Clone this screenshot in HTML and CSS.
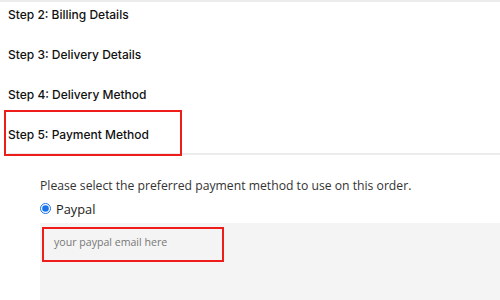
FILE: index.html
```html
<!DOCTYPE html>
<html lang="en">
<head>
  <meta charset="UTF-8" />
  <meta name="viewport" content="width=device-width, initial-scale=1.0"/>
  <title>Checkout</title>
  <link rel="stylesheet" href="styles.css">
</head>

<body>
  <div class="checkout">
    <div class="steps">
      <h4 class="step">Step 2: Billing Details</h4>
      <h4 class="step">Step 3: Delivery Details</h4>
      <h4 class="step">Step 4: Delivery Method</h4>
      <h4 class="step active">Step 5: Payment Method</h4>
    </div>

    <div class="payment">
      <p class="intro">Please select the preferred payment method to use on this order.</p>
      <label class="option">
        <input type="radio" name="payment" checked />
        <span>Paypal</span>
      </label>
      <div class="details">
        <div class="email">your paypal email here</div>
      </div>
    </div>
  </div>
</body>
</html>
```

FILE: styles.css
```css
* { box-sizing: border-box; }

body {
  margin: 0;
  font-family: 'Open Sans', 'Liberation Sans', sans-serif;
  color: #222;
  background: #fff;
}

.checkout {
  border-top: 2px solid #ececec;
}

.steps {
  display: flex;
  flex-direction: column;
  gap: 20px;
  padding: 3px 0 8px;
  margin-left: 8px;
  border-bottom: 2px solid #ececec;
}

.step {
  position: relative;
  margin: 0;
  font-family: Inter, 'Open Sans', sans-serif;
  font-size: 12px;
  font-weight: 500;
  line-height: 20px;
  color: #111;
}

.step.active::after {
  content: "";
  position: absolute;
  left: -4px;
  top: -15px;
  width: 174px;
  height: 42px;
  border: 2px solid #ef1c1c;
}

.payment {
  padding: 21px 0 0 40px;
}

.intro {
  margin: 0;
  font-size: 12.2px;
  line-height: 20px;
  color: #333;
}

.option {
  display: flex;
  align-items: center;
  gap: 5px;
  margin-top: 3px;
  font-size: 12.8px;
  line-height: 20px;
  color: #222;
}

.option input {
  margin: 0 0 2px;
  width: 11px;
  height: 11px;
  accent-color: #1a73e8;
}

.details {
  margin-top: 4px;
  height: 80px;
  background: #f4f4f4;
  padding: 4px 0 0 2px;
}

.email {
  width: 182px;
  height: 35px;
  border: 2px solid #ef1c1c;
  padding: 6px 10px;
  font-size: 10.6px;
  line-height: 14px;
  color: #777;
}
```
